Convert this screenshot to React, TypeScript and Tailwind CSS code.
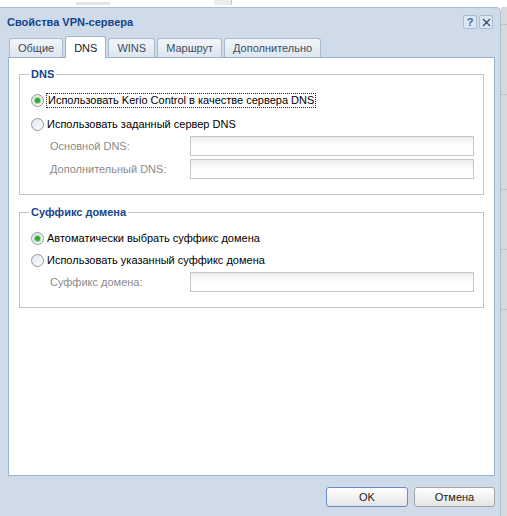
import React from "react";

const font = { fontFamily: '"Liberation Sans", Arial, sans-serif' };

function Radio({ checked }: { checked?: boolean }) {
  return (
    <span className="flex h-[13px] w-[13px] shrink-0 items-center justify-center rounded-full border border-[#8e99a6] bg-gradient-to-br from-[#dfe4ea] to-white">
      {checked && <span className="h-[5px] w-[5px] rounded-full bg-[#34a434] shadow-[0_0_1px_1px_#8fd68f]" />}
    </span>
  );
}

function Field({ label }: { label: string }) {
  return (
    <div className="flex h-[20px] items-center">
      <span className="w-[170px] shrink-0 whitespace-nowrap pl-[30px] text-[#8a8a8a]">{label}</span>
      <div className="h-[20px] w-[284px] border border-[#c2c5cc] bg-gradient-to-b from-[#ececec] via-white to-white" />
    </div>
  );
}

function Legend({ children }: { children: React.ReactNode }) {
  return (
    <div className="flex h-0 items-center">
      <div className="w-[9px] border-t border-[#c4c4c4]" />
      <span className="px-[2px] font-bold text-[#15428b]">{children}</span>
      <div className="flex-1 border-t border-[#c4c4c4]" />
    </div>
  );
}

const tabs = ["Общие", "DNS", "WINS", "Маршрут", "Дополнительно"];

export default function App() {
  return (
    <div className="flex h-[516px] w-[507px] flex-col overflow-hidden bg-white text-[11px] text-black" style={font}>
      <div className="flex h-[7px] shrink-0">
        <div className="ml-[76px] mt-[2px] h-[3px] w-[34px] bg-[#e3e3e3]" />
        <div className="ml-[104px] h-[5px] w-[18px] border-r border-[#c8c8c8] bg-[#ececec]" />
      </div>
      <div className="flex flex-1">
        <div className="flex w-[501px] flex-col rounded-tr-[5px] border-r border-t border-[#a9bfd6] bg-[#cfdbe8] pb-[3px] pl-[8px] pr-[5px]">
          <div className="flex h-[28px] items-center justify-between">
            <span className="text-[11px] font-bold text-[#15428b]" style={{ marginLeft: -1 }}>Свойства VPN-сервера</span>
            <div className="mr-[2px] flex gap-[2px]">
              <span className="flex h-[14px] w-[14px] items-center justify-center rounded-[2px] border border-[#a8bcd3] bg-[#dde7f2] text-[11px] font-bold text-[#3d6cb3]">?</span>
              <span className="flex h-[14px] w-[14px] items-center justify-center rounded-[2px] border border-[#a8bcd3] bg-[#dde7f2] text-[#2c4a74]">
                <svg width="9" height="9" viewBox="0 0 9 9"><path d="M1 1L8 8M8 1L1 8" stroke="currentColor" strokeWidth="1.3" /></svg>
              </span>
            </div>
          </div>
          <div className="flex h-[21px] items-end gap-[2px] pl-[1px]">
            {tabs.map((t, i) => (
              <div
                key={t}
                className={
                  i === 1
                    ? "relative -mb-px flex h-[22px] items-center rounded-t-[3px] border border-b-0 border-[#9fb4cc] bg-white px-[8px] pt-[2px] text-[#222]"
                    : "flex h-[19px] items-center rounded-t-[3px] border border-b-0 border-[#a8bacf] bg-gradient-to-b from-[#f3f6fa] to-[#dde5ee] px-[8px] pt-[1px] text-[#3c4d63]"
                }
              >
                {t}
              </div>
            ))}
          </div>
          <div className="flex h-[419px] flex-col border border-[#99b4d1] bg-white px-[10px] pt-[16px]">
            <div className="h-[121px] border-x border-b border-[#c4c4c4]">
              <Legend>DNS</Legend>
              <div className="flex flex-col pt-[19px]">
                <div className="flex h-[15px] items-center gap-[2px] pl-[11px]">
                  <Radio checked />
                  <span className="border border-dotted border-[#222] px-[1px] leading-[13px]">Использовать Kerio Control в качестве сервера DNS</span>
                </div>
                <div className="mt-[9px] flex h-[15px] items-center gap-[3px] pl-[11px]">
                  <Radio />
                  <span>Использовать заданный сервер DNS</span>
                </div>
                <div className="mt-[4px] flex flex-col gap-[3px]">
                  <Field label="Основной DNS:" />
                  <Field label="Дополнительный DNS:" />
                </div>
              </div>
            </div>
            <div className="mt-[17px] h-[96px] border-x border-b border-[#c4c4c4]">
              <Legend>Суффикс домена</Legend>
              <div className="flex flex-col pt-[19px]">
                <div className="flex h-[15px] items-center gap-[3px] pl-[11px]">
                  <Radio checked />
                  <span>Автоматически выбрать суффикс домена</span>
                </div>
                <div className="mt-[7px] flex h-[15px] items-center gap-[3px] pl-[11px]">
                  <Radio />
                  <span>Использовать указанный суффикс домена</span>
                </div>
                <div className="mt-[4px]">
                  <Field label="Суффикс домена:" />
                </div>
              </div>
            </div>
          </div>
          <div className="flex flex-1 items-start justify-end gap-[6px] pt-[11px]">
            <button className="h-[20px] w-[82px] rounded-[3px] border border-[#6a8cc4] bg-gradient-to-b from-white to-[#e4e4e4] text-[11px] text-[#222]">OK</button>
            <button className="h-[20px] w-[81px] rounded-[3px] border border-[#a4a4a4] bg-gradient-to-b from-white to-[#e4e4e4] text-[11px] text-[#222]">Отмена</button>
          </div>
        </div>
        <div className="flex flex-1 flex-col bg-[#d9d9d9]">
          <div className="h-[18px] border-b border-[#c2c2c2]" />
          <div className="h-[70px] border-b border-[#c2c2c2]" />
          <div className="h-[95px] border-b border-[#c2c2c2]" />
          <div className="h-[60px] border-b border-[#c2c2c2]" />
          <div className="h-[60px] border-b border-[#c2c2c2]" />
        </div>
      </div>
    </div>
  );
}
